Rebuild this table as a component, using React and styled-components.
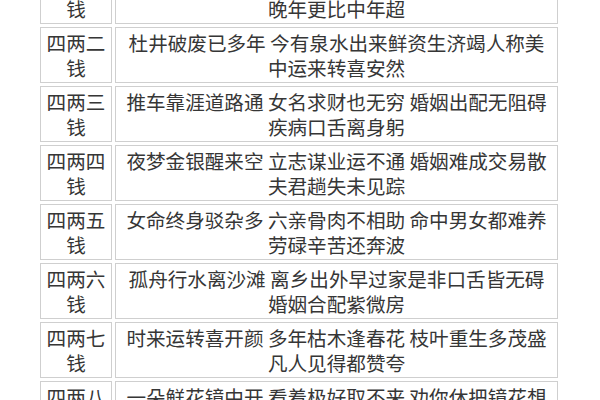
import React from 'react'
import styled, { createGlobalStyle } from 'styled-components'

const GlobalStyle = createGlobalStyle`
  html, body {
    margin: 0;
    padding: 0;
    background: #fff;
    overflow: hidden;
  }
  body {
    font-family: "Noto Sans CJK SC", "Noto Sans", sans-serif;
    color: #333;
  }
`

const Page = styled.div`
  width: 600px;
  height: 400px;
  overflow: hidden;
`

const Table = styled.table`
  margin: -35px 0 0 37px;
  border-collapse: separate;
  border-spacing: 3px;
  table-layout: fixed;
  width: 524px;
`

const Cell = styled.td`
  box-sizing: border-box;
  width: ${props => props.$width}px;
  height: 56px;
  padding: 2px 4px;
  border: 1px solid #cfcfcf;
  font-size: 19.6px;
  line-height: 25px;
  text-align: center;
  vertical-align: middle;
  white-space: nowrap;
  color: #363636;
`

const rows = [
  ['四两一', ['平生做事实艰难 祖业家缘不可攀 自成自立安居分', '晚年更比中年超']],
  ['四两二', ['杜井破废已多年 今有泉水出来鲜资生济竭人称美', '中运来转喜安然']],
  ['四两三', ['推车靠涯道路通 女名求财也无穷 婚姻出配无阻碍', '疾病口舌离身躬']],
  ['四两四', ['夜梦金银醒来空 立志谋业运不通 婚姻难成交易散', '夫君趟失未见踪']],
  ['四两五', ['女命终身驳杂多 六亲骨肉不相助 命中男女都难养', '劳碌辛苦还奔波']],
  ['四两六', ['孤舟行水离沙滩 离乡出外早过家是非口舌皆无碍', '婚姻合配紫微房']],
  ['四两七', ['时来运转喜开颜 多年枯木逢春花 枝叶重生多茂盛', '凡人见得都赞夸']],
  ['四两八', ['一朵鲜花镜中开 看着极好取不来 劝你休把镜花想', '到头只是一场空']],
]

const Lines = ({ lines }) =>
  lines.map((line, i) => (
    <React.Fragment key={i}>
      {i > 0 && <br />}
      {line}
    </React.Fragment>
  ))

export default function App() {
  return (
    <Page>
      <GlobalStyle />
      <Table>
        <tbody>
          {rows.map(([weight, verse]) => (
            <tr key={weight}>
              <Cell $width={72}>
                <Lines lines={[weight, '钱']} />
              </Cell>
              <Cell $width={443}>
                <Lines lines={verse} />
              </Cell>
            </tr>
          ))}
        </tbody>
      </Table>
    </Page>
  )
}
